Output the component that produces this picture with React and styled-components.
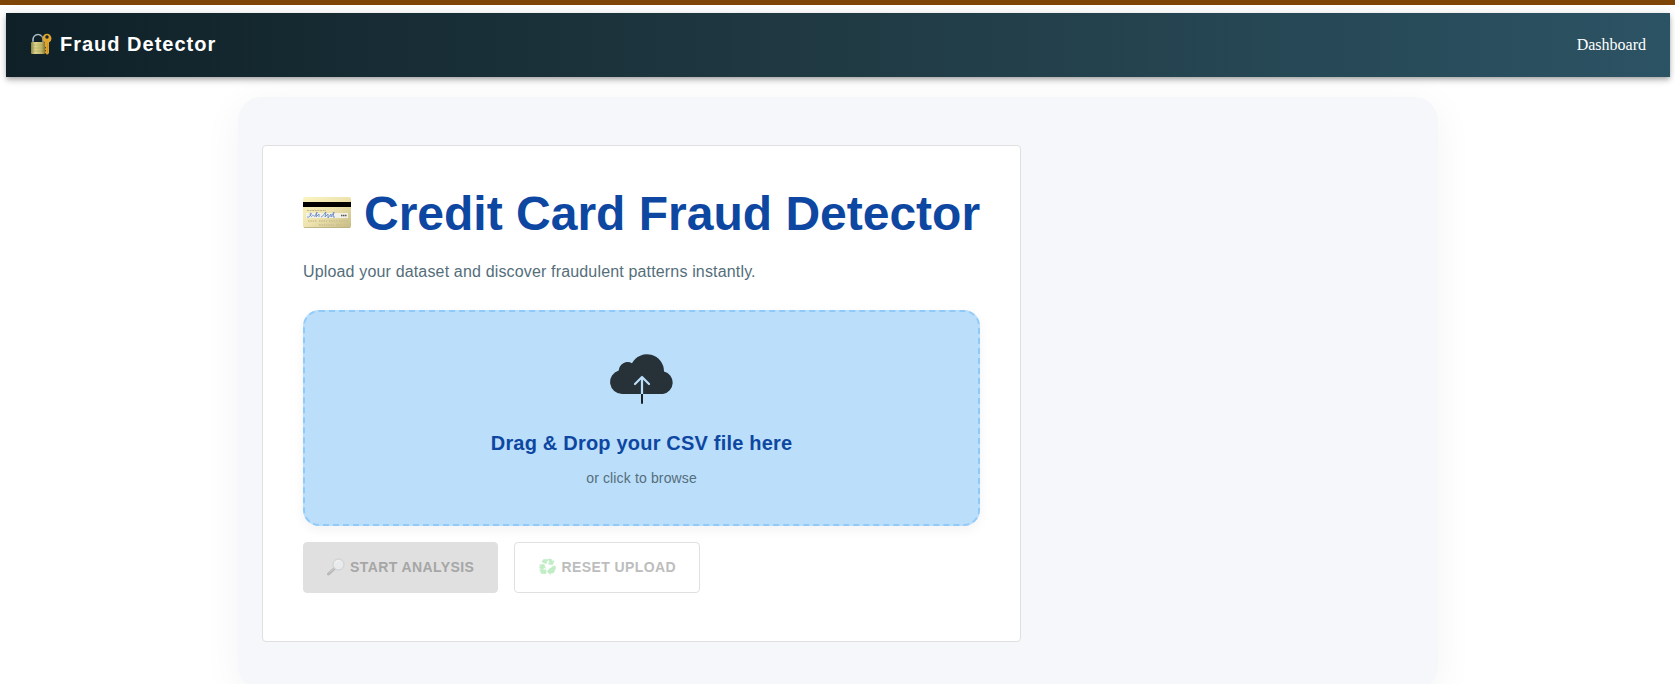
import React from "react";
import styled, { createGlobalStyle } from "styled-components";

const sans = `"Liberation Sans", Arial, Helvetica, sans-serif`;
const serif = `"Liberation Serif", "Times New Roman", serif`;

const GlobalStyle = createGlobalStyle`
  * { box-sizing: border-box; }
  html { scrollbar-width: none; }
  body { margin: 0; background: #fff; font-family: ${serif}; font-size: 16px; }
`;

const Page = styled.div`
  border-top: 5px solid #7f4507;
  padding: 8px 5px 0 6px;
`;

const NavBar = styled.header`
  display: flex;
  align-items: center;
  justify-content: space-between;
  height: 64px;
  padding: 0 24px;
  color: #fff;
  background: linear-gradient(to right, #0f2027, #203a43, #2c5364);
  box-shadow: 0 2px 4px -1px rgba(0, 0, 0, 0.2), 0 4px 5px rgba(0, 0, 0, 0.14),
    0 1px 10px rgba(0, 0, 0, 0.12);
`;

const Brand = styled.div`
  display: flex;
  align-items: center;
  gap: 8px;
  padding-bottom: 2px;
  font: 700 20px/32px ${sans};
  letter-spacing: 1px;
`;

const NavLink = styled.a`
  color: #fff;
  text-decoration: none;
`;

const Panel = styled.main`
  max-width: 1200px;
  margin: 20px auto 0;
  padding: 48px 24px;
  border-radius: 24px;
  background: #f5f7fb;
  box-shadow: 0 8px 40px rgba(0, 0, 0, 0.05);
`;

const Card = styled.section`
  width: fit-content;
  padding: 40px 40px 48px;
  border: 1px solid #e0e0e0;
  border-radius: 4px;
  background: #fff;
  font-family: ${sans};
`;

const Title = styled.h1`
  display: flex;
  align-items: center;
  gap: 13px;
  margin: 0 0 18px;
  color: #0d47a1;
  font-size: 48px;
  line-height: 56px;
`;

const Lead = styled.p`
  margin: 0 0 26px;
  color: #546e7a;
  font-size: 16px;
  line-height: 24px;
  letter-spacing: 0.01em;
`;

const DropZone = styled.label`
  position: relative;
  display: flex;
  flex-direction: column;
  align-items: center;
  padding: 40px 40px 36px;
  border: 2px dashed #90caf9;
  border-radius: 16px;
  background: #bbdefb;
  box-shadow: 0 4px 12px rgba(0, 0, 0, 0.05);
  cursor: pointer;
`;

const FileInput = styled.input`
  position: absolute;
  inset: 0;
  width: 100%;
  height: 100%;
  opacity: 0;
  cursor: pointer;
`;

const DropTitle = styled.span`
  margin-top: 11px;
  color: #0d47a1;
  font-size: 20px;
  font-weight: 700;
  line-height: 32px;
  letter-spacing: 0.01em;
`;

const DropHint = styled.span`
  margin-top: 9px;
  color: #546e7a;
  font-size: 14px;
  line-height: 20px;
  letter-spacing: 0.01em;
`;

const Actions = styled.div`
  display: flex;
  gap: 16px;
  margin-top: 16px;
`;

const ActionButton = styled.button`
  display: flex;
  align-items: center;
  gap: 5px;
  height: 51px;
  padding: 0 23px 2px;
  border: 1px solid #e0e0e0;
  border-radius: 4px;
  background: ${(p) => (p.$filled ? "#e0e0e0" : "#fff")};
  color: ${(p) => (p.$filled ? "#a6a6a6" : "#bdbdbd")};
  font: 700 14px/24px ${sans};
  letter-spacing: 0.03em;
  text-transform: uppercase;
`;

const LockKeyIcon = () => (
  <svg width="22" height="22" viewBox="0 0 22 22" aria-hidden="true">
    <defs>
      <linearGradient id="lockBody">
        <stop offset="0" stopColor="#8e8546" />
        <stop offset=".3" stopColor="#dcd58e" />
        <stop offset=".75" stopColor="#c0b565" />
        <stop offset="1" stopColor="#81763b" />
      </linearGradient>
    </defs>
    <path d="M3 10V6.500a5 5 0 0 1 10 0V10" fill="none" stroke="#8998a8" strokeWidth="1.600" />
    <path d="M3 8V6.500a5 5 0 0 1 8-4" fill="none" stroke="#c2ccd8" strokeWidth=".8" />
    <rect x="1" y="9" width="14" height="12" rx="1" fill="url(#lockBody)" />
    <path d="M1 12h14M1 15h14M1 18h14" stroke="#81783e" strokeWidth=".4" opacity=".5" />
    <path
      d="M17 .8a4.700 4.700 0 0 1 2 8.800v10.700l-2 1.500-2-2v-1l1-1-1-1v-1l1-1-1-1V9.600A4.700 4.700 0 0 1 17 .8Z"
      fill="#e0a42b"
    />
    <circle cx="17" cy="4" r="1.700" fill="#13252c" />
    <path d="M17.500 10v10" stroke="#c98b1a" strokeWidth=".6" />
  </svg>
);

const CardIcon = () => (
  <svg width="48" height="48" viewBox="0 1 48 48" aria-hidden="true">
    <defs>
      <linearGradient id="cardFace" x1="0" y1="0" x2="1" y2="1">
        <stop offset="0" stopColor="#fbf5c0" />
        <stop offset=".5" stopColor="#eee3ae" />
        <stop offset="1" stopColor="#c7bb83" />
      </linearGradient>
    </defs>
    <rect y="8" width="48" height="31" rx="2" fill="url(#cardFace)" />
    <path d="M1 38.500h46" stroke="#b7ad80" strokeWidth=".8" />
    <rect y="13" width="48" height="5" fill="#000" />
    <path d="M4 21.500h19" stroke="#aaa27c" strokeDasharray="2 .6" strokeWidth=".7" />
    <rect x="3" y="24" width="42" height="5" fill="#f1f0e9" />
    <path
      d="M4 28c3 1 5-4 4-4-2 0 0 5 1 3 1-2 2 1 3 0l2-4-1 5 3-3v3M18 28c2 0 4-5 5-5l-1 5 3-3v4l3-4v3l3-5-1 5h2"
      fill="none"
      stroke="#6a8cc4"
      strokeWidth=".9"
    />
    <path d="M38 26.500h6" stroke="#56544c" strokeDasharray="1.500 .5" strokeWidth="1.500" />
    <path d="M5 32h9m2 0h8m2 0h8m2 0h9M16 36h15m2 0h6m2 0h4" stroke="#cbbf90" strokeDasharray="1.500 .8" strokeWidth="1.500" />
  </svg>
);

const CloudUploadIcon = () => (
  <svg width="64" height="64" viewBox="0 -2 64 64" aria-hidden="true">
    <path
      d="M12 40a12 12 0 0 1-3.300-23.500A9 9 0 0 1 22 9.200A17 17 0 0 1 54 17.500A11.500 11.500 0 0 1 53 40Z"
      fill="#263238"
    />
    <path d="M32 40V23M25 30l7-7 7 7" fill="none" stroke="#bbdefb" strokeWidth="2.200" strokeLinecap="round" strokeLinejoin="round" />
    <path d="M32 40v9" stroke="#1b2327" strokeWidth="2" />
    <path d="M32 48v1" stroke="#1b2327" strokeWidth="2" strokeLinecap="round" />
  </svg>
);

const SearchIcon = () => (
  <svg width="18" height="18" viewBox="0 0 18 18" aria-hidden="true">
    <path d="M8 10l-6.500 6" stroke="#b8b8b8" strokeWidth="3" strokeLinecap="round" />
    <path d="M7.500 10l-5 4.500" stroke="#d0d0d0" />
    <circle cx="11.500" cy="6.500" r="5.500" fill="#e9eaec" stroke="#cccdcf" />
    <path d="M8.500 5a4 4 0 0 1 4-2.500" fill="none" stroke="#f5f5f6" />
  </svg>
);

const RecycleIcon = () => (
  <svg width="18" height="18" viewBox="-1 0 18 18" aria-hidden="true">
    <g fill="#c0edc5" stroke="#c0edc5" strokeWidth=".6" strokeLinejoin="round">
      <path d="M4.500 1.500h4.500L7 5.800 3 3.800ZM9.500 1h2.500l1.500 2.300 1.500-.6-1.500 4-4.300-.8 1.500-1z" />
      <path d="M16 7.800 16.700 10l-2.300 5h-3l-.5-4.200 3-2.300ZM11.500 10v6.500L8 13.500Z" />
      <path d="M.5 7 5 6.300l1.500 4-1.700-.7-.8 1.900L.5 10l.9-2.200ZM.7 11.500l6.300.4v3.600H2.500Z" />
    </g>
  </svg>
);

export default function App() {
  return (
    <>
      <GlobalStyle />
      <Page>
        <NavBar>
          <Brand>
            <LockKeyIcon />
            Fraud Detector
          </Brand>
          <nav>
            <NavLink href="#dashboard">Dashboard</NavLink>
          </nav>
        </NavBar>
        <Panel>
          <Card>
            <Title>
              <CardIcon />
              Credit Card Fraud Detector
            </Title>
            <Lead>Upload your dataset and discover fraudulent patterns instantly.</Lead>
            <DropZone>
              <FileInput type="file" accept=".csv" />
              <CloudUploadIcon />
              <DropTitle>Drag &amp; Drop your CSV file here</DropTitle>
              <DropHint>or click to browse</DropHint>
            </DropZone>
            <Actions>
              <ActionButton type="button" disabled $filled>
                <SearchIcon />
                Start Analysis
              </ActionButton>
              <ActionButton type="button" disabled>
                <RecycleIcon />
                Reset Upload
              </ActionButton>
            </Actions>
          </Card>
        </Panel>
      </Page>
    </>
  );
}
